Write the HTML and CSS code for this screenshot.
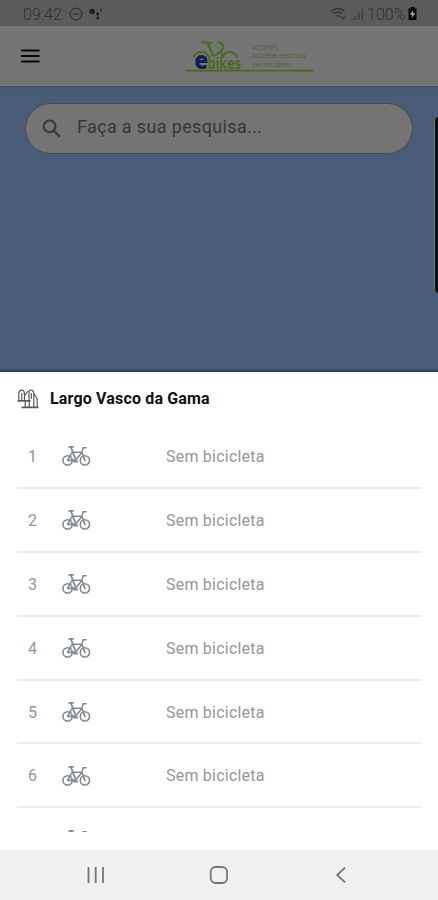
FILE: index.html
```html
<!DOCTYPE html>
<html lang="pt">
<head>
<meta charset="utf-8">
<title>ebikes</title>
<link rel="stylesheet" href="styles.css">
</head>
<body>
<svg width="0" height="0" class="defs">
  <symbol id="bike" viewBox="0 0 29 21">
    <g fill="none" stroke="currentColor" stroke-width="1.6" stroke-linecap="round" stroke-linejoin="round">
      <circle cx="5.6" cy="14.4" r="4.6"/>
      <circle cx="22.9" cy="14.4" r="4.6"/>
      <path d="M5.6 14.4L10.3 6.2H19.8L13.8 14.4H5.6M9 1.4L13.8 14.4M22.9 14.4L19.8 6.2L21.2 1.8H24M7 0.9H11.2M12 15.7h3.5"/>
    </g>
  </symbol>
</svg>
<div class="screen">
  <div class="status">
    <span class="time">09:42</span>
    <svg class="dnd" width="14" height="14" viewBox="0 0 14 14"><circle cx="7" cy="7" r="5.8"/><path d="M4 7h6"/></svg>
    <svg class="dots" width="14" height="12" viewBox="0 0 14 12"><circle cx="3.2" cy="3.5" r="2.7"/><circle cx="8.6" cy="5.8" r="1.6"/><circle cx="12.2" cy="2" r="1"/><circle cx="8.8" cy="9.9" r="1.5"/></svg>
    <span class="grow"></span>
    <svg class="wifi" width="17" height="15" viewBox="0 0 17 15"><path d="M1 4.2Q8 -1.3 14.8 4.2M3.4 7Q8 3.2 12.4 7M5.8 9.5Q8 7.8 10 9.5M8 11.6v.5M11.2 9.8l2 2.2 2-2.2"/></svg>
    <svg class="signal" width="13" height="13" viewBox="0 0 13 13"><path d="M1.2 10.5V12M4.5 8V12M7.8 4.5V12M11.3 1V12"/></svg>
    <span class="percent">100%</span>
    <svg class="battery" width="9" height="14" viewBox="0 0 9 14"><path d="M2.5 0h4v1.5H8.5V13H.5V1.5h2z"/><path class="bolt" d="M5.3 3L1.8 7.8h2.3L3.7 11 7.3 6.2H5z"/></svg>
  </div>
  <header class="header">
    <svg class="menu" width="20" height="16" viewBox="0 0 20 16"><path d="M1 2.5h18.5M1 8h18.5M1 13.5h18.5"/></svg>
    <svg class="logo" width="130" height="36" viewBox="0 0 130 36">
      <g class="frame"><path d="M17 5.2L26.5 5.8M22.8 6L28 18.5M33.5 5.2C38 5.5 40 10 36.5 13.5L29.5 19M36.5 13.5V18M8.8 19.2C12.5 13.5 20 13.5 23.8 19.5M37.5 20C39.5 13.5 48.5 13.3 51.8 19.5"/></g>
      <path class="ground" d="M.5 33.6H128.5"/>
      <text class="logo-e" x="9.2" y="32" textLength="14" lengthAdjust="spacingAndGlyphs">e</text>
      <text class="logo-b" x="22.5" y="32.2" textLength="33.5" lengthAdjust="spacingAndGlyphs">bikes</text>
      <g class="tag"><text x="67" y="12.7" textLength="26">AÇORES</text><text x="67" y="21.2" textLength="54">bicicletas eléctricas</text><text x="67" y="29.6" textLength="39">electric bikes</text></g>
    </svg>
  </header>
  <main class="map">
    <div class="search">
      <svg width="20" height="20" viewBox="0 0 20 20"><circle cx="7.6" cy="7.4" r="5.8"/><path d="M11.9 11.8l6 6"/></svg>
      <span>Faça a sua pesquisa...</span>
    </div>
    <div class="edge"></div>
  </main>
  <section class="sheet">
    <h1 class="title">
      <svg width="22" height="20" viewBox="0 0 22 20"><path d="M1.8 12V4.5Q2 1.2 4.7 1.2Q7.3 1.2 7.5 4.5V12M4.8 4v7M12 11V2.5Q12.3 1 14 1.2Q16.7 1.4 16.8 5V18M14.3 4v6M8.2 12v6M12.3 12v6M20.2 9v9M16.8 4.5l3.4 5M7.5 7l3.5-5"/><path class="base" d="M.5 11.8h13M4.5 18.3H21.5"/></svg>
      <span>Largo Vasco da Gama</span>
    </h1>
    <div class="list">
      <div class="row"><span class="num">1</span><svg class="bike"><use href="#bike"/></svg><span>Sem bicicleta</span></div>
      <div class="row"><span class="num">2</span><svg class="bike"><use href="#bike"/></svg><span>Sem bicicleta</span></div>
      <div class="row"><span class="num">3</span><svg class="bike"><use href="#bike"/></svg><span>Sem bicicleta</span></div>
      <div class="row"><span class="num">4</span><svg class="bike"><use href="#bike"/></svg><span>Sem bicicleta</span></div>
      <div class="row"><span class="num">5</span><svg class="bike"><use href="#bike"/></svg><span>Sem bicicleta</span></div>
      <div class="row"><span class="num">6</span><svg class="bike"><use href="#bike"/></svg><span>Sem bicicleta</span></div>
      <div class="row"><span class="num"></span><svg class="bike"><use href="#bike"/></svg></div>
    </div>
  </section>
  <nav class="nav">
    <svg width="20" height="20" viewBox="0 0 20 20"><path d="M2.5 2v16M9.7 2v16M17 2v16"/></svg>
    <svg width="20" height="20" viewBox="0 0 20 20"><rect x="1.7" y="2" width="16.4" height="16" rx="5"/></svg>
    <svg width="20" height="20" viewBox="0 0 20 20"><path d="M14 2.7L6.2 10l7.8 7.3"/></svg>
  </nav>
</div>
</body>
</html>
```
FILE: styles.css
```css
* { box-sizing: border-box; }
body { margin: 0; font-family: Roboto, sans-serif; }
svg { display: block; flex: none; fill: none; }
.defs { position: absolute; }
.screen { width: 438px; height: 900px; display: flex; flex-direction: column; overflow: hidden; background: #fff; }

.status { height: 26px; flex: none; display: flex; align-items: center; padding: 2px 21px 0 23px; background: #5b5b5b; color: #303030; font-size: 16px; }
.time { width: 40px; font-weight: 300; }
.dnd { margin-left: 6px; stroke: #353535; stroke-width: 1.2; }
.dots { margin-left: 6px; fill: #202020; }
.grow { flex: 1; }
.wifi { stroke: #353535; stroke-width: 1.4; }
.signal { margin-left: 4px; stroke: #414141; stroke-width: 1.8; }
.percent { margin-left: 3px; width: 40px; font-weight: 300; white-space: nowrap; }
.battery { margin-left: 1px; fill: #050505; }
.bolt { fill: #aaa; }

.header { height: 60px; flex: none; display: flex; align-items: flex-start; padding-left: 20px; background: #757575; }
.menu { margin-top: 22px; stroke: #080808; stroke-width: 2.1; }
.logo { margin: 11px 0 0 145px; overflow: visible; }
.frame { stroke: #486b1c; stroke-width: 2.1; stroke-linecap: round; }
.ground { stroke: #486b1c; stroke-width: 1.8; }
.logo-e { font: 800 25px "Open Sans", sans-serif; fill: #112057; }
.logo-b { font: 700 16px "Open Sans", sans-serif; fill: #486b1c; }
.tag { font: 7px "Open Sans", sans-serif; fill: #4e6138; }

.map { height: 286px; flex: none; position: relative; padding: 17px 25px 0; background: linear-gradient(#3f506c, #485c78 4px, #485c78 283px, #183858 286px); }
.search { height: 51px; display: flex; align-items: center; padding-left: 16px; border: 1px solid #454b4b; border-radius: 26px; background: #747474; color: #363636; font-size: 18px; letter-spacing: .35px; }
.search svg { stroke: #383838; stroke-width: 2; margin-right: 15px; }
.search span { padding-bottom: 4px; }
.edge { position: absolute; right: 0; top: 31px; width: 4px; height: 176px; background: #080e0c; border-left: 1px solid #717875; border-radius: 4px 0 0 4px; }

.sheet { flex: 1; min-height: 0; padding: 0 17px; }
.title { height: 53px; margin: 0; display: flex; align-items: center; gap: 11px; font-size: 16px; font-weight: 700; letter-spacing: .16px; color: #111; }
.title svg { stroke: #5a5a5a; stroke-width: 1.2; }
.title .base { stroke-width: 1.8; }
.list { height: 407px; overflow: hidden; }
.row { height: 63.9px; display: flex; align-items: center; padding: 1px 0 0 11px; border-bottom: 2px solid #ececec; color: #969696; font-size: 16px; letter-spacing: .22px; }
.num { width: 34px; }
.bike { width: 29px; height: 21px; margin: 1px 75px 0 0; color: #828890; }

.nav { height: 50px; flex: none; display: flex; justify-content: space-between; align-items: center; padding: 0 87px 0 86px; background: #f0f0f0; }
.nav svg { stroke: #757575; stroke-width: 1.8; }
```
